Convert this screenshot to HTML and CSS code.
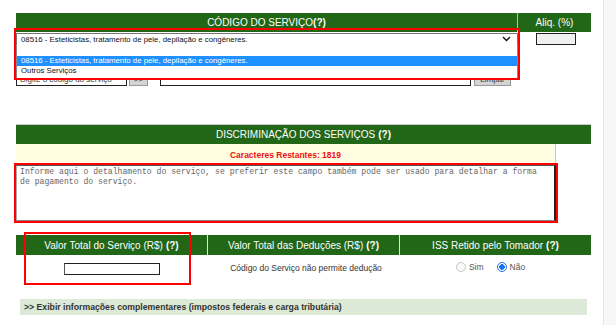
FILE: index.html
```html
<!DOCTYPE html>
<html lang="pt-BR">
<head>
<meta charset="utf-8">
<title>NFS-e</title>
<link rel="stylesheet" href="styles.css">
</head>
<body>
<div class="layout">
  <main class="page">
    <section class="sec-codigo">
      <div class="hrow">
        <div class="hcell cod">CÓDIGO DO SERVIÇO<b>(?)</b></div>
        <div class="hcell aliq">Aliq. (%)</div>
      </div>
      <div class="selrow">
        <div class="selcell">
          <div class="select">
            <span>08516 - Esteticistas, tratamento de pele, depilação e congêneres.</span>
            <svg class="chev" width="9" height="6" viewBox="0 0 9 6"><path d="M1 1 L4.5 4.5 L8 1" fill="none" stroke="#111" stroke-width="1.4"/></svg>
          </div>
        </div>
        <div class="aliqcell"><div class="aliqinput"></div></div>
      </div>
      <div class="searchrow">
        <div class="in-code">Digite o código do serviço</div>
        <div class="btn go">&gt;&gt;</div>
        <div class="in-wide"></div>
        <div class="btn clear">Limpar</div>
      </div>
      <div class="dropdown">
        <div class="opt empty"></div>
        <div class="opt sel">08516 - Esteticistas, tratamento de pele, depilação e congêneres.</div>
        <div class="opt">Outros Serviços</div>
      </div>
      <div class="mark mark-codigo"></div>
    </section>

    <section class="sec-disc">
      <div class="hbar">DISCRIMINAÇÃO DOS SERVIÇOS <b>(?)</b></div>
      <div class="restantes">Caracteres Restantes: 1819</div>
      <div class="redwrap">
        <div class="textarea">Informe aqui o detalhamento do serviço, se preferir este campo também pode ser usado para detalhar a forma de pagamento do serviço.</div>
      </div>
    </section>

    <section class="sec-valores">
      <div class="grid3">
        <div class="gh">Valor Total do Serviço (R$) <b>(?)</b></div>
        <div class="gh">Valor Total das Deduções (R$) <b>(?)</b></div>
        <div class="gh">ISS Retido pelo Tomador <b>(?)</b></div>
        <div class="gc"><div class="valinput"></div></div>
        <div class="gc txt">Código do Serviço não permite dedução</div>
        <div class="gc radios">
          <span class="radio"></span><span class="rlabel">Sim</span>
          <span class="radio on"></span><span class="rlabel">Não</span>
        </div>
      </div>
      <div class="mark mark-valor"></div>
    </section>

    <div class="complement">&gt;&gt; Exibir informações complementares (impostos federais e carga tributária)</div>
  </main>
  <aside class="edge"></aside>
</div>
</body>
</html>
```
FILE: styles.css
```css
* { box-sizing: border-box; }
html, body { margin: 0; padding: 0; background: #fff; }
body { font-family: "Liberation Sans", Arial, sans-serif; color: #222; }

.layout { display: flex; width: 616px; height: 325px; overflow: hidden; }
.page { width: 603px; padding: 13px 0 0 16px; }
.edge { flex: 1; border-left: 1px solid #e4e4e4; background: #f7f7f7; }

/* section 1 */
.sec-codigo { position: relative; width: 575px; height: 111px; }
.hrow { display: flex; height: 19px; background: #226618; color: #fff; font-size: 10px; }
.hcell { display: flex; align-items: center; justify-content: center; }
.hcell.cod { width: 502px; border-right: 1px solid #a8c8a0; }
.hcell.aliq { flex: 1; }
.selrow { display: flex; padding-top: 1px; }
.selcell { width: 502px; }
.select { height: 12px; border: 1px solid #777; background: #fff; display: flex; align-items: center; justify-content: space-between; padding: 0 6px 0 4px; font-size: 7.8px; color: #111; }
.chev { display: block; }
.aliqcell { flex: 1; display: flex; justify-content: center; padding-left: 2px; }
.aliqinput { width: 40px; height: 12px; border: 1px solid #222; background: #f0f0f0; }

.searchrow { display: flex; align-items: flex-start; margin-top: 28px; height: 13px; }
.in-code { width: 111px; height: 13px; border: 1px solid #222; font-size: 8px; color: #444; padding: 1px 3px; line-height: 10px; white-space: nowrap; overflow: hidden; }
.btn { height: 13px; background: #d4d4d4; border: 1px solid #999; font-size: 8px; color: #333; display: flex; align-items: center; justify-content: center; }
.btn.go { width: 19px; margin-left: 2px; }
.in-wide { width: 311px; height: 13px; border: 1px solid #222; margin-left: 12px; }
.btn.clear { width: 37px; margin-left: 3px; }

.dropdown { position: absolute; left: 0; top: 31px; width: 502px; height: 35px; background: #fff; border: 1px solid #888; border-top: none; font-size: 7.8px; color: #111; }
.opt { height: 10px; line-height: 10px; padding-left: 4px; white-space: nowrap; }
.opt.empty { height: 12px; }
.opt.sel { background: #1e90ff; color: #fff; }

.mark { position: absolute; border: 2px solid #ff0000; pointer-events: none; }
.mark-codigo { left: -2px; top: 15px; width: 506px; height: 52px; }

/* section 2 */
.sec-disc { width: 575px; }
.hbar { height: 20px; background: #226618; color: #fff; font-size: 10px; display: flex; align-items: center; justify-content: center; border-top: 1px solid #c8c8c8; gap: 3px; }
.restantes { width: 540px; height: 19px; background: #fffde2; border-right: 1px solid #c8c8c8; color: #ee1111; font-weight: bold; font-size: 8.5px; display: flex; align-items: center; justify-content: center; padding-top: 3px; }
.redwrap { width: 544px; margin-left: -2px; height: 60px; border: 2px solid #ff0000; }
.textarea { height: 56px; border: 1px solid #888; border-right: 2px solid #222; border-left-color: #aaa; border-top-color: #555; font-family: "Liberation Mono", "Courier New", monospace; font-size: 8.15px; line-height: 10px; color: #666; padding: 1px 3px; }

/* section 3 */
.sec-valores { position: relative; width: 575px; margin-top: 12px; }
.grid3 { display: grid; grid-template-columns: 192px 192px 191px; }
.gh { height: 20px; background: #226618; color: #fff; font-size: 10px; display: flex; align-items: center; justify-content: center; gap: 3px; border-right: 1px solid #d8e8d4; }
.gh:nth-child(3) { border-right: none; }
.gc { height: 30px; display: flex; align-items: center; justify-content: center; font-size: 8px; color: #333; }
.valinput { width: 96px; height: 12px; border: 1px solid #222; border-left-color: #555; background: #fff; margin-top: -2px; }
.gc.txt { padding-left: 4px; margin-top: -2px; font-size: 8.5px; }
.radios { gap: 3px; margin-top: -3px; padding-right: 10px; font-size: 8.5px; }
.radio { width: 10px; height: 10px; border: 1px solid #c8c8c8; border-radius: 50%; background: #fafafa; display: inline-block; }
.radio.on { border: 1.5px solid #1a73e8; background: radial-gradient(circle, #1a73e8 0 2.6px, #fff 3px); }
.rlabel { color: #555; margin-right: 10px; }
.rlabel:last-child { margin-right: 0; }
.mark-valor { left: 8px; top: -3px; width: 167px; height: 53px; }

.complement { margin: 14px 0 0 4px; width: 567px; height: 16px; background: #dce9d7; font-size: 8.7px; font-weight: bold; color: #333; display: flex; align-items: center; padding-left: 4px; }
```
